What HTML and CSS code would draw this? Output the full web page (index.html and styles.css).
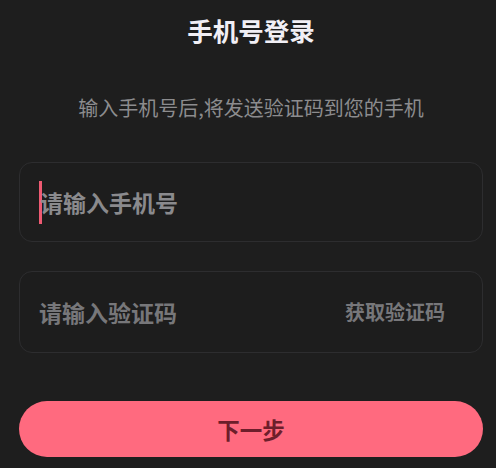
FILE: index.html
```html
<!DOCTYPE html>
<html lang="zh-CN">
<head>
<meta charset="utf-8">
<title>手机号登录</title>
<link rel="stylesheet" href="styles.css">
</head>
<body>
<main class="page">
  <h1 class="title">手机号登录</h1>
  <p class="subtitle">输入手机号后,将发送验证码到您的手机</p>
  <div class="field field-phone">
    <span class="caret"></span>
    <span class="placeholder">请输入手机号</span>
  </div>
  <div class="field field-code">
    <span class="placeholder">请输入验证码</span>
    <span class="get-code">获取验证码</span>
  </div>
  <button class="next-btn" type="button">下一步</button>
</main>
</body>
</html>
```

FILE: styles.css
```css
html, body {
  margin: 0;
  padding: 0;
  background: #1e1e1e;
}
body {
  font-family: "Noto Sans CJK SC", "Noto Sans", sans-serif;
  width: 496px;
  height: 468px;
  overflow: hidden;
}
.page {
  display: flex;
  flex-direction: column;
  padding: 14px 13px 0 19px;
}
.title {
  margin: 0;
  font-size: 25.5px;
  line-height: 32px;
  font-weight: 700;
  color: #f1eff5;
  text-align: center;
}
.subtitle {
  margin: 48px 0 0;
  font-size: 20px;
  line-height: 28px;
  font-weight: 400;
  color: #8c8c8e;
  text-align: center;
}
.field {
  box-sizing: border-box;
  height: 80px;
  border: 1px solid #2d2d2f;
  border-radius: 13px;
  background: #1d1d1d;
  display: flex;
  align-items: center;
  padding: 0 37px 0 19px;
}
.field-phone {
  margin-top: 40px;
}
.field-code {
  margin-top: 29px;
  height: 82px;
  justify-content: space-between;
}
.caret {
  width: 3px;
  height: 43px;
  background: #ee5a72;
  margin-right: -2px;
  flex: none;
}
.placeholder {
  font-size: 23px;
  line-height: 30px;
  font-weight: 700;
  color: #8a8a8d;
}
.field-code .placeholder {
  color: #77777a;
}
.get-code {
  font-size: 20px;
  line-height: 28px;
  font-weight: 700;
  color: #77777a;
}
.next-btn {
  margin-top: 48px;
  height: 56px;
  border: none;
  border-radius: 28px;
  background: #ff6a7f;
  color: #6d1e2b;
  font-family: inherit;
  font-size: 22.5px;
  font-weight: 700;
  padding: 0;
  cursor: pointer;
}
```
